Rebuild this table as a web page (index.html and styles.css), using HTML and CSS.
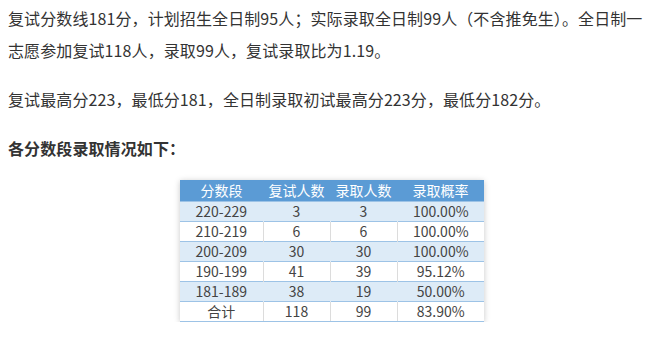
FILE: index.html
```html
<!DOCTYPE html>
<html lang="zh-CN">
<head>
  <meta charset="UTF-8">
  <meta name="viewport" content="width=device-width, initial-scale=1.0">
  <title>复试录取情况</title>
  <link rel="stylesheet" href="styles.css">
</head>
<body>
  <div class="article">
    <p>复试分数线181分，计划招生全日制95人；实际录取全日制99人（不含推免生）。全日制一志愿参加复试118人，录取99人，复试录取比为1.19。</p>
    <p>复试最高分223，最低分181，全日制录取初试最高分223分，最低分182分。</p>
    <p class="subhead">各分数段录取情况如下：</p>

    <table class="score-table">
      <colgroup>
        <col class="c1"><col class="c2"><col class="c3"><col class="c4">
      </colgroup>
      <thead>
        <tr><th>分数段</th><th>复试人数</th><th>录取人数</th><th>录取概率</th></tr>
      </thead>
      <tbody>
        <tr><td>220-229</td><td>3</td><td>3</td><td>100.00%</td></tr>
        <tr><td>210-219</td><td>6</td><td>6</td><td>100.00%</td></tr>
        <tr><td>200-209</td><td>30</td><td>30</td><td>100.00%</td></tr>
        <tr><td>190-199</td><td>41</td><td>39</td><td>95.12%</td></tr>
        <tr><td>181-189</td><td>38</td><td>19</td><td>50.00%</td></tr>
        <tr><td>合计</td><td>118</td><td>99</td><td>83.90%</td></tr>
      </tbody>
    </table>
  </div>
</body>
</html>
```

FILE: styles.css
```css
*, *::before, *::after { box-sizing: border-box; }
body { margin: 0; background: #fff; color: #333; font-family: "Noto Sans CJK SC", "Noto Sans", sans-serif; }
.article { padding: 2px 8px 0; }

/* 正文 */
.article p { margin: 0 0 17px; font-size: 16px; line-height: 32px; letter-spacing: 0.1px; }
.article .subhead { font-weight: bold; margin-bottom: 16px; }

/* 分数段表格 */
.score-table {
  margin: 0 auto;
  width: 304px;
  table-layout: fixed;
  border-collapse: collapse;
  box-shadow: 0 1px 6px rgba(0,0,0,0.22);
  font-size: 14px;
  color: #444;
  text-align: center;
}
.score-table .c1 { width: 83px; }
.score-table .c2 { width: 67px; }
.score-table .c3 { width: 67px; }
.score-table .c4 { width: 87px; }
.score-table th { background: #5b9bd5; color: #fff; font-weight: normal; height: 21px; padding: 0; line-height: 20px; }
.score-table td { height: 20px; padding: 0; line-height: 19px; border-top: 1px solid #9dc3e6; border-left: 1px solid #dcdcdc; }
.score-table td:first-child { border-left: none; }
.score-table tbody tr:nth-child(odd) td { background: #ddebf7; border-left-color: #ddebf7; }
.score-table tbody tr:last-child td { border-bottom: 1px solid #9dc3e6; }
```
